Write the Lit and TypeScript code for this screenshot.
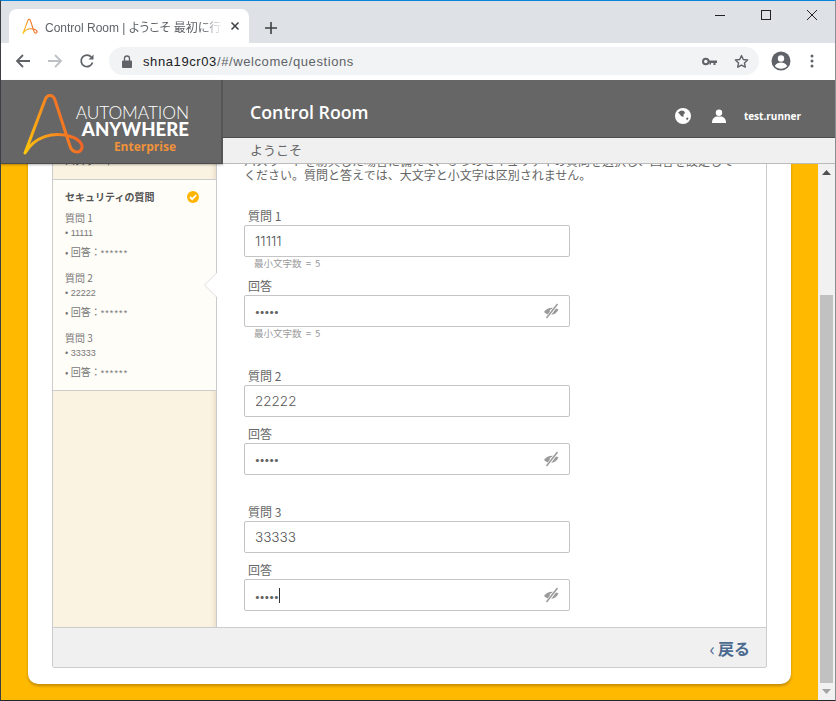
import { LitElement, html, css, svg } from "lit"
import { customElement } from "lit/decorators.js"

const logoMark = (w: number, h: number, sw: number, box = "0 0 90 84") => html`
    <svg width=${w} height=${h} viewBox=${box} fill="none">
        <defs>
            <linearGradient id="lg${w}" x1="0" y1="1" x2="1" y2="0.6">
                <stop offset="0" stop-color="#ffc60a"/>
                <stop offset="0.5" stop-color="#f7941d"/>
                <stop offset="1" stop-color="#f15a29"/>
            </linearGradient>
        </defs>
        <path stroke="url(#lg${w})" stroke-width=${sw} stroke-linecap="round" stroke-linejoin="round"
            d="M24 73 L44 20 C46 14 52 14 54 20 L69 66 C71 73 79 74 81 68 C82 63 76 58 68 56 C52 52 34 56 24 73Z"/>
    </svg>`

const eyeOff = svg`
    <path d="M1 9 C4 4 11 3.500 15.500 6.500 C13 12 6 14 1 9Z" fill="#9a9a9a"/>
    <circle cx="8.500" cy="8" r="1.800" fill="#fff"/>
    <path d="M14 1.500 L4 15" stroke="#fff" stroke-width="3"/>
    <path d="M14.500 1 L3.500 15" stroke="#9a9a9a" stroke-width="1.500"/>`

@customElement("app-root")
export class AppRoot extends LitElement {
    static styles = css`
        :host {
            display: flex;
            flex-direction: column;
            width: 836px;
            height: 701px;
            overflow: hidden;
            box-sizing: border-box;
            border-top: 1px solid #0a84d8;
            border-left: 1px solid #3b3f44;
            border-right: 1px solid #8a8d91;
            border-bottom: 1px solid #23272b;
            font-family: "Noto Sans CJK JP", "Noto Sans", sans-serif;
            color: #666;
            background: #fff;
        }
        svg { display: block; flex: none; }

        .tabs {
            height: 42px;
            flex: none;
            display: flex;
            align-items: flex-end;
            background: #dee1e6;
            padding-left: 8px;
        }
        .tab {
            width: 240px;
            height: 34px;
            box-sizing: border-box;
            background: #fff;
            border-radius: 8px 8px 0 0;
            display: flex;
            align-items: center;
            padding: 0 9px 0 13px;
            gap: 7px;
        }
        .tab-title {
            flex: 1;
            white-space: nowrap;
            overflow: hidden;
            font-size: 12px;
            color: #5f6368;
            font-family: "Liberation Sans", "Noto Sans CJK JP", sans-serif;
            font-feature-settings: "palt";
            -webkit-mask-image: linear-gradient(to right, #000 88%, transparent);
            mask-image: linear-gradient(to right, #000 88%, transparent);
        }
        .plus { margin: 0 0 9px 16px; }
        .win {
            margin-left: auto;
            align-self: flex-start;
            display: flex;
            gap: 36px;
            padding: 9px 18px 0 0;
        }

        .toolbar {
            height: 37px;
            flex: none;
            display: flex;
            align-items: center;
            background: #fff;
            padding-bottom: 1px;
            box-sizing: border-box;
        }
        .nav { width: 32px; display: flex; justify-content: center; }
        .nav:first-child { margin-left: 6px; }
        .omni {
            width: 650px;
            height: 28px;
            margin-left: 6px;
            border-radius: 14px;
            background: #f1f3f4;
            display: flex;
            align-items: center;
            padding: 0 10px 0 13px;
            box-sizing: border-box;
        }
        .url {
            flex: 1;
            margin-left: 11px;
            font-size: 13px;
            letter-spacing: 0.6px;
            color: #5f6368;
            font-family: "Liberation Sans", sans-serif;
        }
        .url b { font-weight: 400; color: #202124; }
        .key { margin-right: 17px; }
        .avatar { margin-left: 12px; }
        .dots { margin-left: 19px; }

        .header {
            height: 84px;
            flex: none;
            display: flex;
            position: relative;
            z-index: 2;
        }
        .logo {
            width: 222px;
            flex: none;
            box-sizing: border-box;
            background: #666;
            border-right: 2px solid #555;
            border-bottom: 1px solid #4c4c4c;
            box-shadow: 0 1px 2px rgba(0, 0, 0, .3);
            display: flex;
            align-items: center;
        }
        .logo-text {
            margin-left: -16px;
            width: 114px;
            text-align: right;
            font-family: Lato, "Open Sans", sans-serif;
            color: #fff;
            padding-top: 16px;
        }
        .logo-a { font-size: 17.400px; font-weight: 300; line-height: 16px; letter-spacing: -0.1px; white-space: nowrap; }
        .logo-b { font-size: 18.600px; font-weight: 900; line-height: 17px; white-space: nowrap; }
        .logo-c {
            font-size: 12px;
            font-weight: 700;
            color: #f0923a;
            line-height: 17px;
            padding-right: 13px;
            font-family: "Open Sans", sans-serif;
        }
        .head-right { flex: 1; display: flex; flex-direction: column; }
        .head-top {
            height: 58px;
            flex: none;
            background: #666;
            border-bottom: 1px solid #4c4c4c;
            display: flex;
            align-items: center;
            color: #fff;
            padding: 0 34px 0 27px;
            box-sizing: border-box;
        }
        .app-name {
            font-family: "Open Sans", sans-serif;
            font-size: 17.800px;
            font-weight: 600;
            flex: 1;
            margin-top: 7px;
        }
        .head-icons { display: flex; align-items: center; margin-top: 15px; }
        .head-user { font-family: "Open Sans", sans-serif; font-size: 10px; font-weight: 700; margin-left: 18px; }
        .head-sub {
            height: 26px;
            box-sizing: border-box;
            background: #f0f0f0;
            border-bottom: 1px solid #bbb;
            padding-left: 27px;
            font-size: 13px;
            line-height: 24px;
        }

        .content { flex: 1; display: flex; min-height: 0; }
        .viewport {
            flex: 1;
            min-width: 0;
            background: #ffba00;
            overflow: hidden;
            display: flex;
            flex-direction: column;
            justify-content: flex-end;
            padding: 0 27px 16px 27px;
        }
        .sheet {
            flex: none;
            background: #fff;
            border-radius: 0 0 10px 10px;
            box-shadow: 0 2px 3px rgba(120, 80, 0, .45);
            padding: 0 24px 16px;
        }
        .card {
            border: 1px solid #ccc;
            border-top: none;
            border-radius: 0 0 3px 3px;
        }
        .body { display: flex; }
        .side {
            width: 164px;
            flex: none;
            box-sizing: border-box;
            background: #fbf3e2;
            border-right: 1px solid #ccc;
            box-shadow: inset -6px 0 6px -6px rgba(120, 90, 40, .25);
        }
        .side-top {
            height: 26px;
            padding-left: 12px;
            box-sizing: border-box;
            border-bottom: 1px solid #ccc;
            font-size: 10px;
            line-height: 14px;
        }
        .side-item {
            position: relative;
            background: #fffdf8;
            border-bottom: 1px solid #ccc;
            height: 211px;
            box-sizing: border-box;
            padding: 10px 17px 0 12px;
        }
        .side-title {
            display: flex;
            justify-content: space-between;
            align-items: center;
            font-weight: 700;
            font-size: 10px;
            line-height: 14px;
            color: #555;
            margin-bottom: 7px;
        }
        .side-q, .side-v, .side-a { height: 14px; line-height: 14px; white-space: nowrap; color: #777; }
        .side-q { font-size: 10px; margin-bottom: 1px; }
        .side-v { font-size: 9px; margin-bottom: 5px; font-family: "Liberation Sans", sans-serif; }
        .side-a { font-size: 10px; margin-bottom: 12px; }
        .stars { font-family: "Liberation Sans", sans-serif; font-size: 9px; letter-spacing: 1.100px; }
        .notch {
            position: absolute;
            right: -1px;
            top: 93px;
            width: 0;
            height: 0;
            border-top: 12px solid transparent;
            border-bottom: 12px solid transparent;
            border-right: 12px solid #fff;
            filter: drop-shadow(-1px 0 0 #ddd);
        }

        .main { flex: 1; min-width: 0; padding: 0 26px 16px 27px; }
        .intro {
            margin: 0 0 26px;
            width: 494px;
            font-size: 12px;
            line-height: 14px;
            color: #666;
        }
        .label { font-size: 12px; line-height: 16px; height: 16px; margin: 0 0 1px 4px; color: #666; }
        .input {
            width: 326px;
            height: 32px;
            box-sizing: border-box;
            border: 1px solid #c4c4c4;
            border-radius: 2px;
            display: flex;
            align-items: center;
            justify-content: space-between;
            padding: 0 10px;
            font-family: Inter, "Open Sans", sans-serif;
            font-weight: 300;
            font-size: 13.500px;
            color: #555;
            background: #fff;
        }
        .dots-val { font-size: 10px; font-weight: 700; letter-spacing: 0; color: #666; }
        .caret { display: inline-block; width: 1px; height: 15px; background: #333; vertical-align: -3px; }
        .hint { font-size: 9.500px; word-spacing: 2px; line-height: 11px; height: 11px; margin: 1px 0 9px 10px; color: #999; white-space: nowrap; }
        .hint.end { margin-bottom: 29px; }
        .gap-a { margin-top: 9px; }
        .gap-b { margin-top: 29px; }

        .footer {
            height: 39px;
            background: #f0f0f0;
            border-top: 1px solid #ccc;
            display: flex;
            align-items: center;
            justify-content: flex-end;
            padding-right: 16px;
            font-size: 16px;
            font-weight: 700;
            color: #4a6a8f;
            border-radius: 0 0 3px 3px;
        }
        .footer span { font-weight: 400; margin-right: 3px; font-size: 18px; line-height: 20px; }

        .scrollbar {
            width: 17px;
            flex: none;
            background: #f1f1f1;
            display: flex;
            flex-direction: column;
            align-items: center;
            justify-content: space-between;
            position: relative;
        }
        .scroll-arrow { height: 17px; display: flex; align-items: center; justify-content: center; }
        .thumb { width: 13px; height: 388px; margin-top: auto; background: #c1c1c1; }
    `

    private qa(n: number, v: string) {
        return html`
            <div class="side-q">質問 ${n}</div>
            <div class="side-v">• ${v}</div>
            <div class="side-a">• 回答：<span class="stars">******</span></div>`
    }

    private eye() {
        return html`<svg width="16" height="16" viewBox="0 0 16 16">${eyeOff}</svg>`
    }

    render() {
        return html`
            <div class="tabs">
                <div class="tab">
                    ${logoMark(16, 17, 4.500, "20 12 65 66")}
                    <div class="tab-title">Control Room | ようこそ 最初に行うログインの設定</div>
                    <svg width="10" height="10" viewBox="0 0 10 10"><path d="M1.500 1.500l7 7M8.500 1.500l-7 7" stroke="#3c4043" stroke-width="1.500"/></svg>
                </div>
                <svg class="plus" width="12" height="12" viewBox="0 0 12 12"><path d="M6 0v12M0 6h12" stroke="#3c4043" stroke-width="1.600"/></svg>
                <div class="win">
                    <svg width="10" height="10" viewBox="0 0 10 10"><path d="M0 5.500h10" stroke="#222" stroke-width="1"/></svg>
                    <svg width="10" height="10" viewBox="0 0 10 10"><rect x=".5" y=".5" width="9" height="9" fill="none" stroke="#222"/></svg>
                    <svg width="10" height="10" viewBox="0 0 10 10"><path d="M0 0l10 10M10 0L0 10" stroke="#222" stroke-width="1"/></svg>
                </div>
            </div>
            <div class="toolbar">
                <div class="nav"><svg width="16" height="16" viewBox="0 0 16 16"><path d="M15 8H2M8 2L2 8l6 6" fill="none" stroke="#5f6368" stroke-width="1.800"/></svg></div>
                <div class="nav"><svg width="16" height="16" viewBox="0 0 16 16"><path d="M1 8h13M8 2l6 6-6 6" fill="none" stroke="#bdc1c6" stroke-width="1.800"/></svg></div>
                <div class="nav"><svg width="16" height="16" viewBox="0 0 16 16"><path d="M13.500 9.500A5.800 5.800 0 1 1 12.300 4" fill="none" stroke="#5f6368" stroke-width="1.800"/><path d="M14.500 1.500v5h-5z" fill="#5f6368"/></svg></div>
                <div class="omni">
                    <svg width="10" height="13" viewBox="0 0 10 13"><path d="M1 5.500h8a1 1 0 0 1 1 1V12a1 1 0 0 1-1 1H1a1 1 0 0 1-1-1V6.500a1 1 0 0 1 1-1z" fill="#5f6368"/><path d="M2.500 6V3.500a2.500 2.500 0 0 1 5 0V6" fill="none" stroke="#5f6368" stroke-width="1.300"/></svg>
                    <div class="url"><b>shna19cr03</b>/#/welcome/questions</div>
                    <svg class="key" width="15" height="9" viewBox="0 0 15 9"><circle cx="3.800" cy="4.500" r="2.800" fill="none" stroke="#5f6368" stroke-width="2"/><path d="M6.500 3.500H15v2.500h-1.500V8h-2V6H9v1.500H7.500V5.500H6.500z" fill="#5f6368"/></svg>
                    <svg width="15" height="15" viewBox="0 0 24 24"><path d="M12 2.500l2.900 6.300 6.900.8-5.100 4.700 1.400 6.800-6.100-3.400-6.100 3.400 1.400-6.800L2.200 9.600l6.900-.8z" fill="none" stroke="#5f6368" stroke-width="2.200" stroke-linejoin="round"/></svg>
                </div>
                <svg class="avatar" width="20" height="20" viewBox="0 0 20 20"><circle cx="10" cy="10" r="9.500" fill="#5f6368"/><circle cx="10" cy="7.500" r="3.200" fill="#fff"/><path d="M3.800 15c1.500-2.600 4-3.400 6.200-3.400s4.700.8 6.200 3.400c-1.500 1.700-3.700 2.800-6.200 2.800s-4.700-1.100-6.200-2.800z" fill="#fff"/></svg>
                <svg class="dots" width="4" height="14" viewBox="0 0 4 14"><circle cx="2" cy="2" r="1.500" fill="#5f6368"/><circle cx="2" cy="7" r="1.500" fill="#5f6368"/><circle cx="2" cy="12" r="1.500" fill="#5f6368"/></svg>
            </div>
            <div class="header">
                <div class="logo">
                    ${logoMark(90, 84, 3)}
                    <div class="logo-text">
                        <div class="logo-a">AUTOMATION</div>
                        <div class="logo-b">ANYWHERE</div>
                        <div class="logo-c">Enterprise</div>
                    </div>
                </div>
                <div class="head-right">
                    <div class="head-top">
                        <div class="app-name">Control Room</div>
                        <div class="head-icons">
                            <svg width="16" height="16" viewBox="0 0 16 16"><circle cx="8" cy="8" r="8" fill="#fff"/><path d="M3 4.500l3-2 3 .5 1 2-1.500 1.500L8.500 9 6 8 5 6.500zM11 10l2-.5.500 1-1.500 2z" fill="#666"/></svg>
                            <svg style="margin-left:21px" width="14" height="14" viewBox="0 0 14 14"><circle cx="7" cy="3.700" r="3.200" fill="#fff"/><path d="M0 14c0-4 2-6 4.500-6.500h5C12 8 14 10 14 14z" fill="#fff"/></svg>
                            <div class="head-user">test.runner</div>
                        </div>
                    </div>
                    <div class="head-sub">ようこそ</div>
                </div>
            </div>
            <div class="content">
                <div class="viewport">
                    <div class="sheet">
                        <div class="card">
                            <div class="body">
                                <div class="side">
                                    <div class="side-top">パスワード</div>
                                    <div class="side-item">
                                        <div class="side-title">セキュリティの質問
                                            <svg width="12" height="12" viewBox="0 0 12 12"><circle cx="6" cy="6" r="6" fill="#ffb400"/><path d="M3 6l2.200 2.200L9.200 4" fill="none" stroke="#fff" stroke-width="1.800"/></svg>
                                        </div>
                                        ${this.qa(1, "11111")}
                                        ${this.qa(2, "22222")}
                                        ${this.qa(3, "33333")}
                                        <div class="notch"></div>
                                    </div>
                                </div>
                                <div class="main">
                                    <p class="intro">パスワードを紛失した場合に備えて、３つのセキュリティの質問を選択し、回答を設定してください。質問と答えでは、大文字と小文字は区別されません。</p>
                                    <div class="label">質問 1</div>
                                    <div class="input">11111</div>
                                    <div class="hint">最小文字数 = 5</div>
                                    <div class="label">回答</div>
                                    <div class="input"><span class="dots-val">•••••</span>${this.eye()}</div>
                                    <div class="hint end">最小文字数 = 5</div>
                                    <div class="label">質問 2</div>
                                    <div class="input">22222</div>
                                    <div class="label gap-a">回答</div>
                                    <div class="input"><span class="dots-val">•••••</span>${this.eye()}</div>
                                    <div class="label gap-b">質問 3</div>
                                    <div class="input">33333</div>
                                    <div class="label gap-a">回答</div>
                                    <div class="input"><span class="dots-val">•••••<i class="caret"></i></span>${this.eye()}</div>
                                </div>
                            </div>
                            <div class="footer"><span>‹</span>戻る</div>
                        </div>
                    </div>
                </div>
                <div class="scrollbar">
                    <div class="scroll-arrow"><svg width="9" height="5" viewBox="0 0 9 5"><path d="M4.500 0L9 5H0z" fill="#505050"/></svg></div>
                    <div class="thumb"></div>
                    <div class="scroll-arrow"><svg width="9" height="5" viewBox="0 0 9 5"><path d="M0 0h9L4.500 5z" fill="#a3a3a3"/></svg></div>
                </div>
            </div>
        `
    }
}
